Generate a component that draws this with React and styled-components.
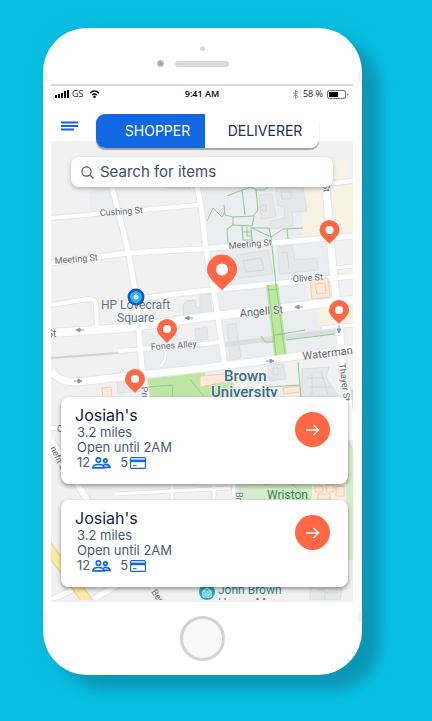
import React, { useState } from "react";
import styled, { createGlobalStyle } from "styled-components";

const GlobalStyle = createGlobalStyle`
  * { box-sizing: border-box; }
  body {
    margin: 0;
    background: #08bfe2;
    font-family: Inter, "Liberation Sans", sans-serif;
  }
  button, input { font: inherit; }
`;

const Page = styled.main`
  min-height: 100vh;
  padding: 28px 70px 46px 43px;
  background: #08bfe2;
`;

const Phone = styled.div`
  position: relative;
  padding: 0 9px 14px 8px;
  border-radius: 44px;
  background: #fff;
  box-shadow: 17px 14px 14px #0c96b6, 4px 4px 22px rgba(12, 150, 182, 0.3);
`;

const AntennaMarks = styled.span`
  position: absolute;
  left: 0;
  right: 0;
  height: 10px;
  border: solid #f7f1f3;
  border-width: 0 4px;
  ${(p) => (p.$bottom ? "bottom: 53px;" : "top: 44px;")}
`;

const TopBezel = styled.div`
  display: flex;
  flex-direction: column;
  align-items: center;
  gap: 9px;
  height: 56px;
  padding-top: 18px;
`;

const Sensor = styled.span`
  width: 5px;
  height: 5px;
  border-radius: 50%;
  background: #d8d8d8;
`;

const SpeakerRow = styled.div`
  display: flex;
  align-items: center;
  gap: 11px;
  padding-right: 18px;
`;

const Camera = styled.span`
  width: 7px;
  height: 7px;
  border: 2px solid #bdbdbd;
  border-radius: 50%;
  background: #999;
`;

const Speaker = styled.span`
  width: 54px;
  height: 6px;
  border-radius: 3px;
  background: #dadada;
`;

const Screen = styled.div`
  border-top: 2px solid #d9d9d9;
  border-bottom: 2px solid #efefef;
`;

const StatusBar = styled.div`
  display: grid;
  grid-template-columns: 1fr auto 1fr;
  align-items: center;
  height: 16px;
  padding: 0 4px;
  font-family: "Open Sans", sans-serif;
  font-size: 9px;
  line-height: 12px;
  color: #222;
`;

const StatusGroup = styled.div`
  display: flex;
  align-items: center;
  gap: ${(p) => p.$gap}px;
  justify-content: ${(p) => (p.$end ? "flex-end" : "flex-start")};
`;

const Clock = styled.span`
  font-weight: 600;
  color: #000;
`;

const Header = styled.header`
  display: flex;
  align-items: flex-start;
  gap: 18px;
  height: 39px;
  padding: 12px 34px 0 10px;
`;

const MenuButton = styled.button`
  display: flex;
  width: 17px;
  padding: 7px 0 0;
  border: 0;
  background: none;
`;

const Toggle = styled.div`
  position: relative;
  z-index: 1;
  display: grid;
  grid-template-columns: 109fr 114fr;
  flex: 1;
  height: 34px;
  overflow: hidden;
  border-radius: 9px;
  background: #fff;
  box-shadow: 0 2px 1px #a3a3a3;
`;

const ToggleOption = styled.button`
  padding: 0 0 0 ${(p) => (p.$active ? 14 : 6)}px;
  border: 0;
  font-size: 14px;
  line-height: 20px;
  color: ${(p) => (p.$active ? "#fff" : "#1c3156")};
  background: ${(p) => (p.$active ? "#1168e0" : "#fff")};
`;

const MapArea = styled.section`
  position: relative;
  display: flex;
  flex-direction: column;
  justify-content: space-between;
  min-height: 459px;
  padding: 16px 5px 13px 10px;
  overflow: hidden;
  background: #f1f2f3;
`;

const MapDrawing = styled.svg`
  position: absolute;
  inset: 0;
  width: 100%;
  height: 100%;
  font-family: Roboto, sans-serif;
`;

const SearchBox = styled.label`
  position: relative;
  display: flex;
  align-items: center;
  gap: 6px;
  height: 30px;
  margin: 0 15px 0 10px;
  padding: 0 10px;
  border-radius: 8px;
  background: #fff;
  box-shadow: 0 2px 4px rgba(0, 0, 0, 0.25);
  color: #40506e;
`;

const SearchInput = styled.input`
  flex: 1;
  min-width: 0;
  padding: 0;
  border: 0;
  outline: 0;
  background: none;
  font-size: 15px;
  line-height: 20px;
  color: inherit;
  &::placeholder { color: #40506e; opacity: 1; }
`;

const Cards = styled.div`
  position: relative;
  display: grid;
  gap: 16px;
`;

const Card = styled.article`
  display: flex;
  justify-content: space-between;
  align-items: flex-start;
  min-height: 87px;
  padding: 8px 18px 13px 14px;
  border-radius: 8px;
  background: #fff;
  box-shadow: 0 2px 4px rgba(0, 0, 0, 0.4);
`;

const ShopName = styled.h2`
  margin: 0;
  font-size: 16px;
  line-height: 20px;
  font-weight: 400;
  color: #14223f;
`;

const Detail = styled.p`
  display: flex;
  align-items: center;
  margin: 0;
  padding-left: 2px;
  font-size: 13px;
  line-height: 15px;
  color: #4b5a76;
`;

const Stat = styled.span`
  display: flex;
  align-items: center;
  gap: 2px;
  margin-right: 9px;
`;

const GoButton = styled.button`
  display: grid;
  place-items: center;
  width: 35px;
  height: 35px;
  margin-top: 7px;
  padding: 0;
  border: 0;
  border-radius: 50%;
  background: #ff6745;
`;

const HomeRow = styled.div`
  display: flex;
  justify-content: center;
  padding-top: 14px;
`;

const HomeButton = styled.button`
  width: 45px;
  height: 45px;
  border: 3px solid #d3d3d3;
  border-radius: 50%;
  background: #f9f9f9;
`;

const roads = [
  ["M51 218 L198 205", 4],
  ["M51 263 L128 253 L200 249 L353 236", 5],
  ["M112 187 L128 250 L132 272 L136 297 L139 332 L142 368 L147 398", 5],
  ["M196 180 L202 213 L206 250 L213 285 L220 332 L225 366", 5],
  ["M325 175 L330 233 L333 270 L339 322 L342 362 L348 400 L352 440", 7],
  ["M326 184 L353 181", 4],
  ["M335 268 L353 266", 3],
  ["M51 305 L88 299 Q96 298 96 305 L97 326", 4],
  ["M137 299 L200 291 L353 276", 5],
  ["M51 333 L125 328 L205 317 L353 300", 8],
  ["M118 351 L205 344 L221 342", 4],
  ["M166 351 L165 360 L160 367", 2],
  ["M51 371 Q60 383 78 382 L112 378 L205 368 L353 349", 7],
  ["M322 328 L353 325", 3],
  ["M51 428 L64 428", 4],
  ["M51 440 L90 505", 6],
  ["M51 600 L85 584", 5],
  ["M86 604 L122 582", 5],
  ["M148 582 L163 604", 4],
  ["M172 480 L172 500 M115 494 L230 488", 3],
  ["M198 484 L234 484 L233 498 M214 484 L214 498", 3],
];

const buildings = [
  "M259 195 L272 194 L276 217 L261 219Z",
  "M276 187 L303 187 L307 211 L292 212 L293 226 L270 229 L270 221 L285 218 L284 207 L278 206Z",
  "M237 255 L268 250 L273 274 L239 278 L233 268Z",
  "M278 247 L292 245 L295 260 L317 258 L318 270 L279 274Z",
  "M227 325 L236 323 L241 358 L230 360Z",
  "M186 301 L195 300 L196 307 L203 308 L203 315 L184 317 L183 306Z",
  "M200 295 L209 292 L212 312 L200 315Z",
  "M302 369 L329 367 L326 377 L338 396 L302 397Z",
  "M268 365 L283 364 L286 379 L269 381Z",
  "M117 379 L138 377 L140 391 L118 393Z",
  "M195 329 L207 327 L208 339 L196 341Z",
  "M164 180 L190 185 L190 189 L164 187Z",
  "M310 586 L342 588 L340 600 L310 600Z",
];

const walkways = [
  "M227 196 L242 190 L251 187 L257 190 L264 190 L270 186",
  "M242 190 L245 215 M256 190 L258 210 L253 216 L233 217 L225 215 L224 205",
  "M207 221 L213 208 L222 217 L225 211",
  "M233 217 L233 225 L252 226 L254 216 M233 225 L227 229 L228 243",
  "M242 226 L243 240 L252 240 M247 227 L247 236 L252 236 M251 227 L252 241 M242 232 L252 232",
  "M252 228 L271 237 L283 229 L303 228 M287 229 L288 239 M252 228 L269 228 L271 237 L276 285",
  "M261 336 L265 342 L273 342 L275 335 L305 330 M286 340 L335 334",
  "M298 362 L301 397 M269 387 L300 385",
  "M147 387 L173 385 L172 398 M190 379 L205 398",
];

const pins = [
  [222, 271, 1.5],
  [329.5, 231, 1],
  [339, 311, 1],
  [167, 330, 1],
  [135, 380, 1],
];

const oneWays = [
  [80, 330, -1],
  [189, 318, -1],
  [299, 307, -1],
  [78, 381, 1],
  [270, 361, 1],
];

function Pin({ x, y, scale }) {
  return (
    <g transform={`translate(${x} ${y}) scale(${scale})`}>
      <path d="M0 13 C-3 9 -10 5 -10 -1 A10 10 0 0 1 10 -1 C10 5 3 9 0 13Z" fill="#ff6745" />
      <circle cy="-1" r="4" fill="#fff" />
    </g>
  );
}

function CampusMap() {
  return (
    <MapDrawing viewBox="51 141 302 459" preserveAspectRatio="xMidYMid slice" role="img" aria-label="Map of nearby shops">
      <rect x="51" y="141" width="302" height="459" fill="#f1f1f2" />
      <path d="M202 188 L325 188 L340 345 L225 365Z M140 330 L222 345 L225 370 L143 374Z M90 187 L112 187 L122 210 L90 213Z" fill="#ecedf0" />
      <g fill="#f8f2e5">
        <path d="M304 190 L324 188 L329 234 L302 237Z M333 162 L349 162 L349 179 L333 182Z M333 187 L353 184 L353 233 L337 235Z" />
        <path d="M306 281 L332 278 L334 301 L309 304Z M336 265 L353 265 L353 274 L336 276Z M316 309 L353 303 L353 324 L318 327Z" />
        <path d="M311 484 L346 484 L346 500 L311 500Z M194 375 L205 374 L205 386 L195 386Z" />
      </g>
      <path d="M146 379 L205 372 L205 398 L148 398Z M200 386 L233 382 L236 398 L200 398Z M348 391 L353 389 L353 420 L350 410Z" fill="#c0e6a6" />
      <path d="M236 484 L312 484 L312 500 L240 500Z M346 430 L353 450 L353 560 L346 560Z" fill="#d4edca" />
      <path d="M265 485 Q272 482 292 484 L310 500" fill="none" stroke="#a9d6a0" />
      <g fill="#e6e7e9" stroke="#dddee1" strokeWidth="1">
        {buildings.map((d) => <path key={d} d={d} />)}
      </g>
      <g fill="none" stroke="#d6d7da">
        <path d="M262 205 h4 v6 h-4z M281 192 h10 v7 h-9z M243 261 l18 -3 3 12 -18 2z M282 253 l5 -1 2 17" />
        <path d="M312 374 v20 M307 378 h17 M309 387 h22 M321 371 l7 24 M273 368 h5 v7 h-5z" />
        <path d="M317 590 h8 v10 M326 593 h12" />
      </g>
      <path d="M51 358 L118 353" stroke="#d2d2d4" strokeWidth="2" />
      <path d="M222 345 L335 331" stroke="#dcdde0" strokeWidth="5" />
      <g fill="none" strokeLinejoin="round">
        {roads.map(([d, w]) => <path key={d} d={d} stroke="#e5e6e8" strokeWidth={w + 2} />)}
        {roads.map(([d, w]) => <path key={d} d={d} stroke="#fff" strokeWidth={w} />)}
      </g>
      <path d="M47 546 L91 606" stroke="#e8cf83" strokeWidth="11" />
      <path d="M47 546 L91 606" stroke="#fbe9a5" strokeWidth="9" />
      <path d="M266 285 L278 284 L287 354 L274 356Z" fill="#bce99b" />
      <g fill="none" stroke="#8ccb98" strokeWidth="1">
        {walkways.map((d) => <path key={d} d={d} />)}
        <path d="M268 285 L276 355 M276 284 L285 354 M267 290 L279 289 M274 335 L285 334" />
      </g>
      <g fill="#fdeadb" stroke="#f8caa7" strokeWidth="1">
        <path d="M310 280 L328 278 L330 297 L312 299Z M315 284 L325 283 L326 293 L317 294Z" />
        <path d="M102 388 L111 387 L112 398 L103 398Z M200 376 L225 374 L226 382 L200 387Z M283 388 L299 386 L300 392 L284 394Z" />
        <path d="M315 486 h8 v6 h-8z M326 485 h8 v7 h-8z M336 486 h8 v10 h-8z M318 494 h12 v6 h-12z" />
      </g>
      <g stroke="#8f94bd" strokeWidth="1" fill="#8f94bd">
        {oneWays.map(([x, y, dir]) => (
          <path key={x + "-" + y} transform={`translate(${x} ${y}) scale(${dir} 1)`} d="M-4 0 H1 M0 -2 L4 0 L0 2Z" />
        ))}
        <path d="M339 325 V330 M337 329 L339 333 L341 329Z" />
      </g>
      <g fill="#676c70" fontSize="9" stroke="#f6f6f6" strokeWidth="1" paintOrder="stroke">
        <text x="100" y="216" transform="rotate(-4 100 216)">Cushing St</text>
        <text x="55" y="264" transform="rotate(-5 55 264)">Meeting St</text>
        <text x="229" y="249" transform="rotate(-5 229 249)">Meeting St</text>
        <text x="293" y="282" transform="rotate(-4 293 282)">Olive St</text>
        <text x="151" y="350" transform="rotate(-4 151 350)">Fones Alley</text>
        <text x="339" y="364" transform="rotate(82 339 364)">Thayer St</text>
        <text x="141" y="387" transform="rotate(85 141 387)">Prospect</text>
        <text x="323" y="184" transform="rotate(85 323 184)">St</text>
        <text x="50" y="448" transform="rotate(64 50 448)">nefit St</text>
        <text x="57" y="432">C</text>
        <text x="151" y="592" transform="rotate(55 151 592)">Benefit</text>
        <text x="236" y="492" transform="rotate(90 236 492)">Brown</text>
        <text x="240" y="317" transform="rotate(-5 240 317)" fontSize="11">Angell St</text>
        <text x="303" y="360" transform="rotate(-7 303 360)" fontSize="11">Waterman</text>
        <text x="47" y="337" fontSize="10">St</text>
      </g>
      <g fill="#627b88" fontSize="12" stroke="#f3f4f5" strokeWidth="1" paintOrder="stroke">
        <text x="101" y="309">HP Lovecraft</text>
        <text x="117" y="322">Square</text>
      </g>
      <g fill="#386f7e" fontSize="15" fontWeight="500" stroke="#f3f4f5" strokeWidth="2" paintOrder="stroke">
        <text x="224" y="381">Brown</text>
        <text x="211" y="397">University</text>
      </g>
      <text x="267" y="499" fontSize="12" fill="#35824f">Wriston</text>
      <g fill="#3a8795" fontSize="12">
        <text x="218" y="594">John Brown</text>
        <text x="218" y="607">House Museum</text>
      </g>
      <circle cx="207" cy="592" r="8" fill="#16adc0" />
      <path d="M203 591 L207 588 L211 591Z M203 591 V597 H211 V591 M205 592 V596 M207 592 V596 M209 592 V596" fill="none" stroke="#fff" />
      <circle cx="136" cy="297" r="7" fill="#fff" stroke="#0f55d5" strokeWidth="3" />
      <circle cx="136" cy="297" r="4" fill="#fff" stroke="#1bbfe0" strokeWidth="3" />
      {pins.map(([x, y, s]) => <Pin key={x} x={x} y={y} scale={s} />)}
    </MapDrawing>
  );
}

function PeopleIcon() {
  return (
    <svg width="19" height="12" viewBox="0 0 19 12" fill="none" stroke="#1168e0" strokeWidth="1.7" aria-label="shoppers">
      <circle cx="6.4" cy="3.1" r="2.2" />
      <circle cx="13.4" cy="3.6" r="1.8" />
      <path d="M1 10.8 C1 8.6 3 7.5 6.4 7.5 S12 8.6 12 10.8Z M11.5 7.6 C15 6.9 18 8.1 18 10.3 H12" />
    </svg>
  );
}

function CreditCardIcon() {
  return (
    <svg width="16" height="12" viewBox="0 0 16 12" aria-label="cards">
      <rect x=".6" y=".6" width="14.8" height="10.8" rx="1" fill="#fff" stroke="#1168e0" strokeWidth="1.1" />
      <path d="M0 2.6 H16 V5.2 H0Z" fill="#1168e0" />
      <path d="M3 8.6 H6.5" stroke="#1168e0" />
    </svg>
  );
}

function ShopCard({ name, distance, hours, shoppers, cards }) {
  return (
    <Card>
      <div>
        <ShopName>{name}</ShopName>
        <Detail>{distance}</Detail>
        <Detail>{hours}</Detail>
        <Detail>
          <Stat>{shoppers}<PeopleIcon /></Stat>
          <Stat>{cards}<CreditCardIcon /></Stat>
        </Detail>
      </div>
      <GoButton aria-label={`Open ${name}`}>
        <svg width="15" height="12" viewBox="0 0 15 12" fill="none" stroke="#fff" strokeWidth="1.3">
          <path d="M1 6 H13.5 M8.5 1 L13.5 6 L8.5 11" />
        </svg>
      </GoButton>
    </Card>
  );
}

const shops = [
  { id: 1, name: "Josiah's", distance: "3.2 miles", hours: "Open until 2AM", shoppers: 12, cards: 5 },
  { id: 2, name: "Josiah's", distance: "3.2 miles", hours: "Open until 2AM", shoppers: 12, cards: 5 },
];

export default function App() {
  const [mode, setMode] = useState("SHOPPER");
  return (
    <Page>
      <GlobalStyle />
      <Phone>
        <AntennaMarks />
        <AntennaMarks $bottom />
        <TopBezel>
          <Sensor />
          <SpeakerRow>
            <Camera />
            <Speaker />
          </SpeakerRow>
        </TopBezel>
        <Screen>
          <StatusBar>
            <StatusGroup $gap={3}>
              <svg width="14" height="8" viewBox="0 0 14 8" fill="#000" aria-hidden="true">
                <path d="M0 5h2v3H0z M3 4h2v4H3z M6 3h2v5H6z M9 1h2v7H9z M12 0h2v8h-2z" />
              </svg>
              GS
              <svg width="14" height="8" viewBox="-2 0 14 8" fill="none" stroke="#000" strokeWidth="1.3" aria-hidden="true">
                <path d="M2 3 Q6.500 -1 11 3 M4 5 Q6.500 3 9 5" />
                <circle cx="6.5" cy="6.8" r=".6" fill="#000" />
              </svg>
            </StatusGroup>
            <Clock>9:41 AM</Clock>
            <StatusGroup $gap={4} $end>
              <svg width="7" height="9" viewBox="0 0 7 9" fill="none" stroke="#888" strokeWidth=".9" aria-hidden="true">
                <path d="M1 2.5 L6 6.5 L3.5 8.5 V.5 L6 2.5 L1 6.5" />
              </svg>
              58 %
              <svg width="22" height="9" viewBox="0 0 22 9" aria-hidden="true">
                <rect x=".5" y=".5" width="18" height="8" rx="1.5" fill="#fff" stroke="#777" />
                <rect x="2" y="2" width="9" height="5" fill="#000" />
                <path d="M20 3 Q22 4.5 20 6Z" fill="#555" />
              </svg>
            </StatusGroup>
          </StatusBar>
          <Header>
            <MenuButton aria-label="Menu">
              <svg width="17" height="10" viewBox="0 0 17 10" stroke="#1168e0" strokeWidth="1.8">
                <path d="M0 1.5 H17 M0 5 H17 M0 8.5 H13" />
              </svg>
            </MenuButton>
            <Toggle>
              {["SHOPPER", "DELIVERER"].map((m) => (
                <ToggleOption key={m} $active={m === mode} aria-pressed={m === mode} onClick={() => setMode(m)}>
                  {m}
                </ToggleOption>
              ))}
            </Toggle>
          </Header>
          <MapArea>
            <CampusMap />
            <SearchBox>
              <svg width="13" height="13" viewBox="0 0 13 13" fill="none" stroke="currentColor" strokeWidth="1.1" aria-hidden="true">
                <circle cx="5.5" cy="5.5" r="4.6" />
                <path d="M9 9 L12.3 12.3" />
              </svg>
              <SearchInput type="search" placeholder="Search for items" aria-label="Search for items" />
            </SearchBox>
            <Cards>
              {shops.map(({ id, ...shop }) => <ShopCard key={id} {...shop} />)}
            </Cards>
          </MapArea>
        </Screen>
        <HomeRow>
          <HomeButton aria-label="Home" />
        </HomeRow>
      </Phone>
    </Page>
  );
}
